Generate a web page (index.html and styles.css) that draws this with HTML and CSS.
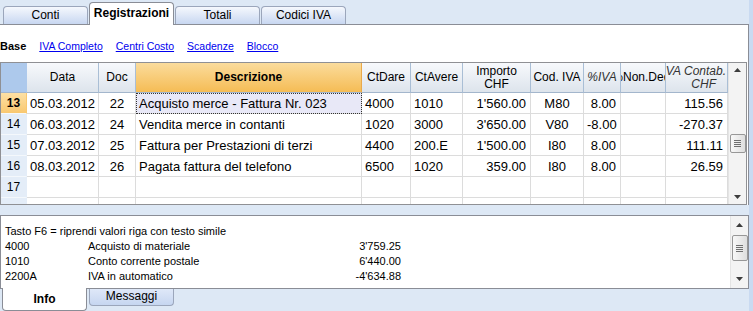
FILE: index.html
```html
<!DOCTYPE html>
<html lang="it">

<head>
    <meta charset="UTF-8">
    <meta name="viewport" content="width=device-width, initial-scale=1.0">
    <title>Registrazioni</title>
    <link rel="stylesheet" href="styles.css">
</head>

<body>
    <div class="window">
        <div class="main">
            <div class="tabs">
                <div class="tab">Conti</div>
                <div class="tab active">Registrazioni</div>
                <div class="tab">Totali</div>
                <div class="tab">Codici IVA</div>
            </div>

            <div class="page">
                <div class="subnav">
                    <b>Base</b>
                    <a href="#">IVA Completo</a>
                    <a href="#">Centri Costo</a>
                    <a href="#">Scadenze</a>
                    <a href="#">Blocco</a>
                </div>

                <div class="grid">
                    <div class="grid-body">
                        <table class="entries">
                            <colgroup>
                                <col style="width: 26px">
                                <col style="width: 72px">
                                <col style="width: 37px">
                                <col style="width: 226px">
                                <col style="width: 49px">
                                <col style="width: 52px">
                                <col style="width: 68px">
                                <col style="width: 53px">
                                <col style="width: 37px">
                                <col style="width: 45px">
                                <col style="width: 62px">
                            </colgroup>
                            <thead>
                                <tr>
                                    <th class="corner"></th>
                                    <th><div class="hd">Data</div></th>
                                    <th><div class="hd">Doc</div></th>
                                    <th class="sorted"><div class="hd">Descrizione</div></th>
                                    <th><div class="hd">CtDare</div></th>
                                    <th><div class="hd">CtAvere</div></th>
                                    <th><div class="hd two">Importo<br>CHF</div></th>
                                    <th><div class="hd">Cod. IVA</div></th>
                                    <th><div class="hd calc">%IVA</div></th>
                                    <th><div class="hd">%Non.Ded.</div></th>
                                    <th><div class="hd two calc contab"><span>IVA Contab.</span><span class="cur">CHF</span></div></th>
                                </tr>
                            </thead>
                            <tbody>
                                <tr>
                                    <td class="num current">13</td>
                                    <td>05.03.2012</td>
                                    <td class="c">22</td>
                                    <td class="desc selected">Acquisto merce - Fattura Nr. 023</td>
                                    <td>4000</td>
                                    <td>1010</td>
                                    <td class="r">1'560.00</td>
                                    <td class="c">M80</td>
                                    <td class="r">8.00</td>
                                    <td></td>
                                    <td class="r">115.56</td>
                                </tr>
                                <tr>
                                    <td class="num">14</td>
                                    <td>06.03.2012</td>
                                    <td class="c">24</td>
                                    <td class="desc">Vendita merce in contanti</td>
                                    <td>1020</td>
                                    <td>3000</td>
                                    <td class="r">3'650.00</td>
                                    <td class="c">V80</td>
                                    <td class="r">-8.00</td>
                                    <td></td>
                                    <td class="r">-270.37</td>
                                </tr>
                                <tr>
                                    <td class="num">15</td>
                                    <td>07.03.2012</td>
                                    <td class="c">25</td>
                                    <td class="desc">Fattura per Prestazioni di terzi</td>
                                    <td>4400</td>
                                    <td>200.E</td>
                                    <td class="r">1'500.00</td>
                                    <td class="c">I80</td>
                                    <td class="r">8.00</td>
                                    <td></td>
                                    <td class="r">111.11</td>
                                </tr>
                                <tr>
                                    <td class="num">16</td>
                                    <td>08.03.2012</td>
                                    <td class="c">26</td>
                                    <td class="desc">Pagata fattura del telefono</td>
                                    <td>6500</td>
                                    <td>1020</td>
                                    <td class="r">359.00</td>
                                    <td class="c">I80</td>
                                    <td class="r">8.00</td>
                                    <td></td>
                                    <td class="r">26.59</td>
                                </tr>
                                <tr>
                                    <td class="num">17</td>
                                    <td></td><td></td><td class="desc"></td><td></td><td></td>
                                    <td></td><td></td><td></td><td></td><td></td>
                                </tr>
                                <tr>
                                    <td class="num"></td>
                                    <td></td><td></td><td class="desc"></td><td></td><td></td>
                                    <td></td><td></td><td></td><td></td><td></td>
                                </tr>
                            </tbody>
                        </table>
                    </div>
                    <div class="vscroll grid-scroll">
                        <div class="arrow"><svg width="7" height="4" viewBox="0 0 7 4"><path d="M0 4 L3.5 0 L7 4 Z" fill="#3c3c3c"/></svg></div>
                        <div class="thumb"><i></i><i></i><i></i><i></i></div>
                        <div class="fill"></div>
                        <div class="arrow"><svg width="7" height="4" viewBox="0 0 7 4"><path d="M0 0 L3.5 4 L7 0 Z" fill="#3c3c3c"/></svg></div>
                    </div>
                </div>
            </div>

            <div class="gap"></div>

            <div class="info">
                <div class="info-text">
                    <div class="hint">Tasto F6 = riprendi valori riga con testo simile</div>
                    <div class="acc">
                        <span>4000</span><span>Acquisto di materiale</span><span class="amt">3'759.25</span>
                    </div>
                    <div class="acc">
                        <span>1010</span><span>Conto corrente postale</span><span class="amt">6'440.00</span>
                    </div>
                    <div class="acc">
                        <span>2200A</span><span>IVA in automatico</span><span class="amt">-4'634.88</span>
                    </div>
                </div>
                <div class="vscroll info-scroll">
                    <div class="arrow"><svg width="7" height="4" viewBox="0 0 7 4"><path d="M0 4 L3.5 0 L7 4 Z" fill="#3c3c3c"/></svg></div>
                    <div class="thumb"><i></i><i></i><i></i><i></i></div>
                    <div class="fill"></div>
                    <div class="arrow"><svg width="7" height="4" viewBox="0 0 7 4"><path d="M0 0 L3.5 4 L7 0 Z" fill="#3c3c3c"/></svg></div>
                </div>
            </div>

            <div class="btabs">
                <div class="btab active">Info</div>
                <div class="btab">Messaggi</div>
            </div>
        </div>
        <div class="edge"></div>
    </div>
</body>

</html>
```

FILE: styles.css
```css
html,
body {
    margin: 0;
    padding: 0;
}

body {
    background-color: #dde8f5;
    color: #000;
    font-family: "Liberation Sans", Arial, sans-serif;
    font-size: 11px;
    height: 311px;
    overflow: hidden;
    width: 753px;
}

.window {
    display: flex;
    height: 311px;
}

.main {
    width: 749px;
}

.edge {
    background-color: #c9daf1;
    flex: 1;
}

/* top tab strip */

.tabs {
    align-items: flex-end;
    border-bottom: 1px solid #8a8d96;
    display: flex;
    gap: 1px;
    height: 24px;
    padding-left: 3px;
}

.tab {
    background: linear-gradient(#f5f8fd, #c8d7f1);
    border: 1px solid #9ba6bb;
    border-bottom: 0;
    border-radius: 4px 4px 0 0;
    box-sizing: border-box;
    font-size: 12px;
    height: 18px;
    line-height: 17px;
    text-align: center;
    width: 85px;
}

.tab.active {
    background: #fff;
    border-color: #8a8d96;
    font-weight: bold;
    height: 23px;
    line-height: 20px;
    margin-bottom: -1px;
}

/* white page */

.page {
    background-color: #fff;
    border-right: 1px solid #8a8d96;
    height: 180px;
}

.subnav {
    align-items: center;
    box-sizing: border-box;
    display: flex;
    font-size: 10.5px;
    gap: 13px;
    height: 37px;
    padding-top: 5px;
}

.subnav b {
    font-size: 11px;
}

.subnav a {
    color: #0000ee;
}

/* entries grid */

.grid {
    border: 1px solid #8f9094;
    display: flex;
    height: 141px;
    width: 745px;
}

.grid-body {
    overflow: hidden;
    width: 727px;
}

.entries {
    border-collapse: separate;
    border-spacing: 0;
    table-layout: fixed;
    width: 727px;
}

.entries th,
.entries td {
    border-bottom: 1px solid #dcdcdc;
    border-right: 1px solid #dcdcdc;
    box-sizing: border-box;
    overflow: hidden;
    padding: 0;
    white-space: nowrap;
}

.entries th {
    background: linear-gradient(#f7f9fc, #dde4ec);
    border-bottom-color: #a3b6cc;
    border-right-color: #a9bed5;
    font-size: 12px;
    font-weight: normal;
    height: 30px;
}

.entries th.corner {
    background: #adc9ec;
    border-right-color: #adc9ec;
}

.entries th.sorted {
    background: linear-gradient(#fbdc9c, #f5bc55);
    border-right-color: #e9a94a;
    font-weight: bold;
}

.hd {
    display: flex;
    justify-content: center;
    line-height: 13px;
    overflow: hidden;
    white-space: nowrap;
}

.hd.two {
    align-items: center;
    flex-direction: column;
}

.hd.calc {
    color: #333;
    font-style: italic;
}

.hd.contab {
    align-items: flex-end;
    padding-right: 1px;
}

.hd.contab .cur {
    padding-right: 10px;
}

.entries td {
    font-size: 13px;
    height: 21px;
    padding: 0 3px;
}

.entries td.c {
    text-align: center;
}

.entries td.r {
    padding-right: 4px;
    text-align: right;
}

.entries td.num {
    background-color: #e4edf8;
    border-bottom-color: #f4f8fc;
    border-right-color: #e4edf8;
    font-size: 12px;
    padding: 0;
    text-align: center;
}

.entries td.num.current {
    background: linear-gradient(#fde0a4, #f9c870);
    border-right-color: #f9c870;
    font-weight: bold;
}

.entries td.selected {
    background-color: #e8e8f7;
    outline: 1px dotted #333;
    outline-offset: -1px;
}

/* scrollbars */

.vscroll {
    align-items: center;
    background-color: #f3f3f3;
    border-left: 1px solid #e4e4e4;
    display: flex;
    flex-direction: column;
    width: 17px;
}

.vscroll .arrow {
    align-items: center;
    display: flex;
    height: 14px;
    justify-content: center;
}

.vscroll .fill {
    flex: 1;
}

.thumb {
    align-items: center;
    background: linear-gradient(90deg, #f8f8f8, #dedede);
    border: 1px solid #979797;
    border-radius: 2px;
    box-sizing: border-box;
    display: flex;
    flex-direction: column;
    gap: 1px;
    justify-content: center;
    width: 16px;
}

.thumb i {
    border-top: 1px solid #6f6f6f;
    display: block;
    width: 7px;
}

.grid-scroll .thumb {
    height: 19px;
    margin-top: 57px;
}

.info-scroll .arrow {
    height: 18px;
}

.info-scroll .thumb {
    height: 26px;
    margin-top: 1px;
}

/* info panel */

.gap {
    height: 10px;
}

.info {
    background-color: #fff;
    border: 1px solid #8a8d96;
    display: flex;
    height: 72px;
}

.info-text {
    flex: 1;
    line-height: 15px;
    padding: 8px 0 0 4px;
}

.acc {
    display: grid;
    grid-template-columns: 83px 220px 93px;
}

.acc .amt {
    text-align: right;
}

/* bottom tabs */

.btabs {
    display: flex;
    gap: 2px;
    padding-left: 2px;
}

.btab {
    background: linear-gradient(#dfe8f8, #c6d6f0);
    border: 1px solid #9ba6bb;
    border-top: 0;
    border-radius: 0 0 4px 4px;
    box-sizing: border-box;
    font-size: 12px;
    height: 17px;
    line-height: 15px;
    text-align: center;
    width: 85px;
}

.btab.active {
    background: #fff;
    border-color: #8a8d96;
    font-weight: bold;
    height: 23px;
    line-height: 22px;
    margin-top: -1px;
}
```
